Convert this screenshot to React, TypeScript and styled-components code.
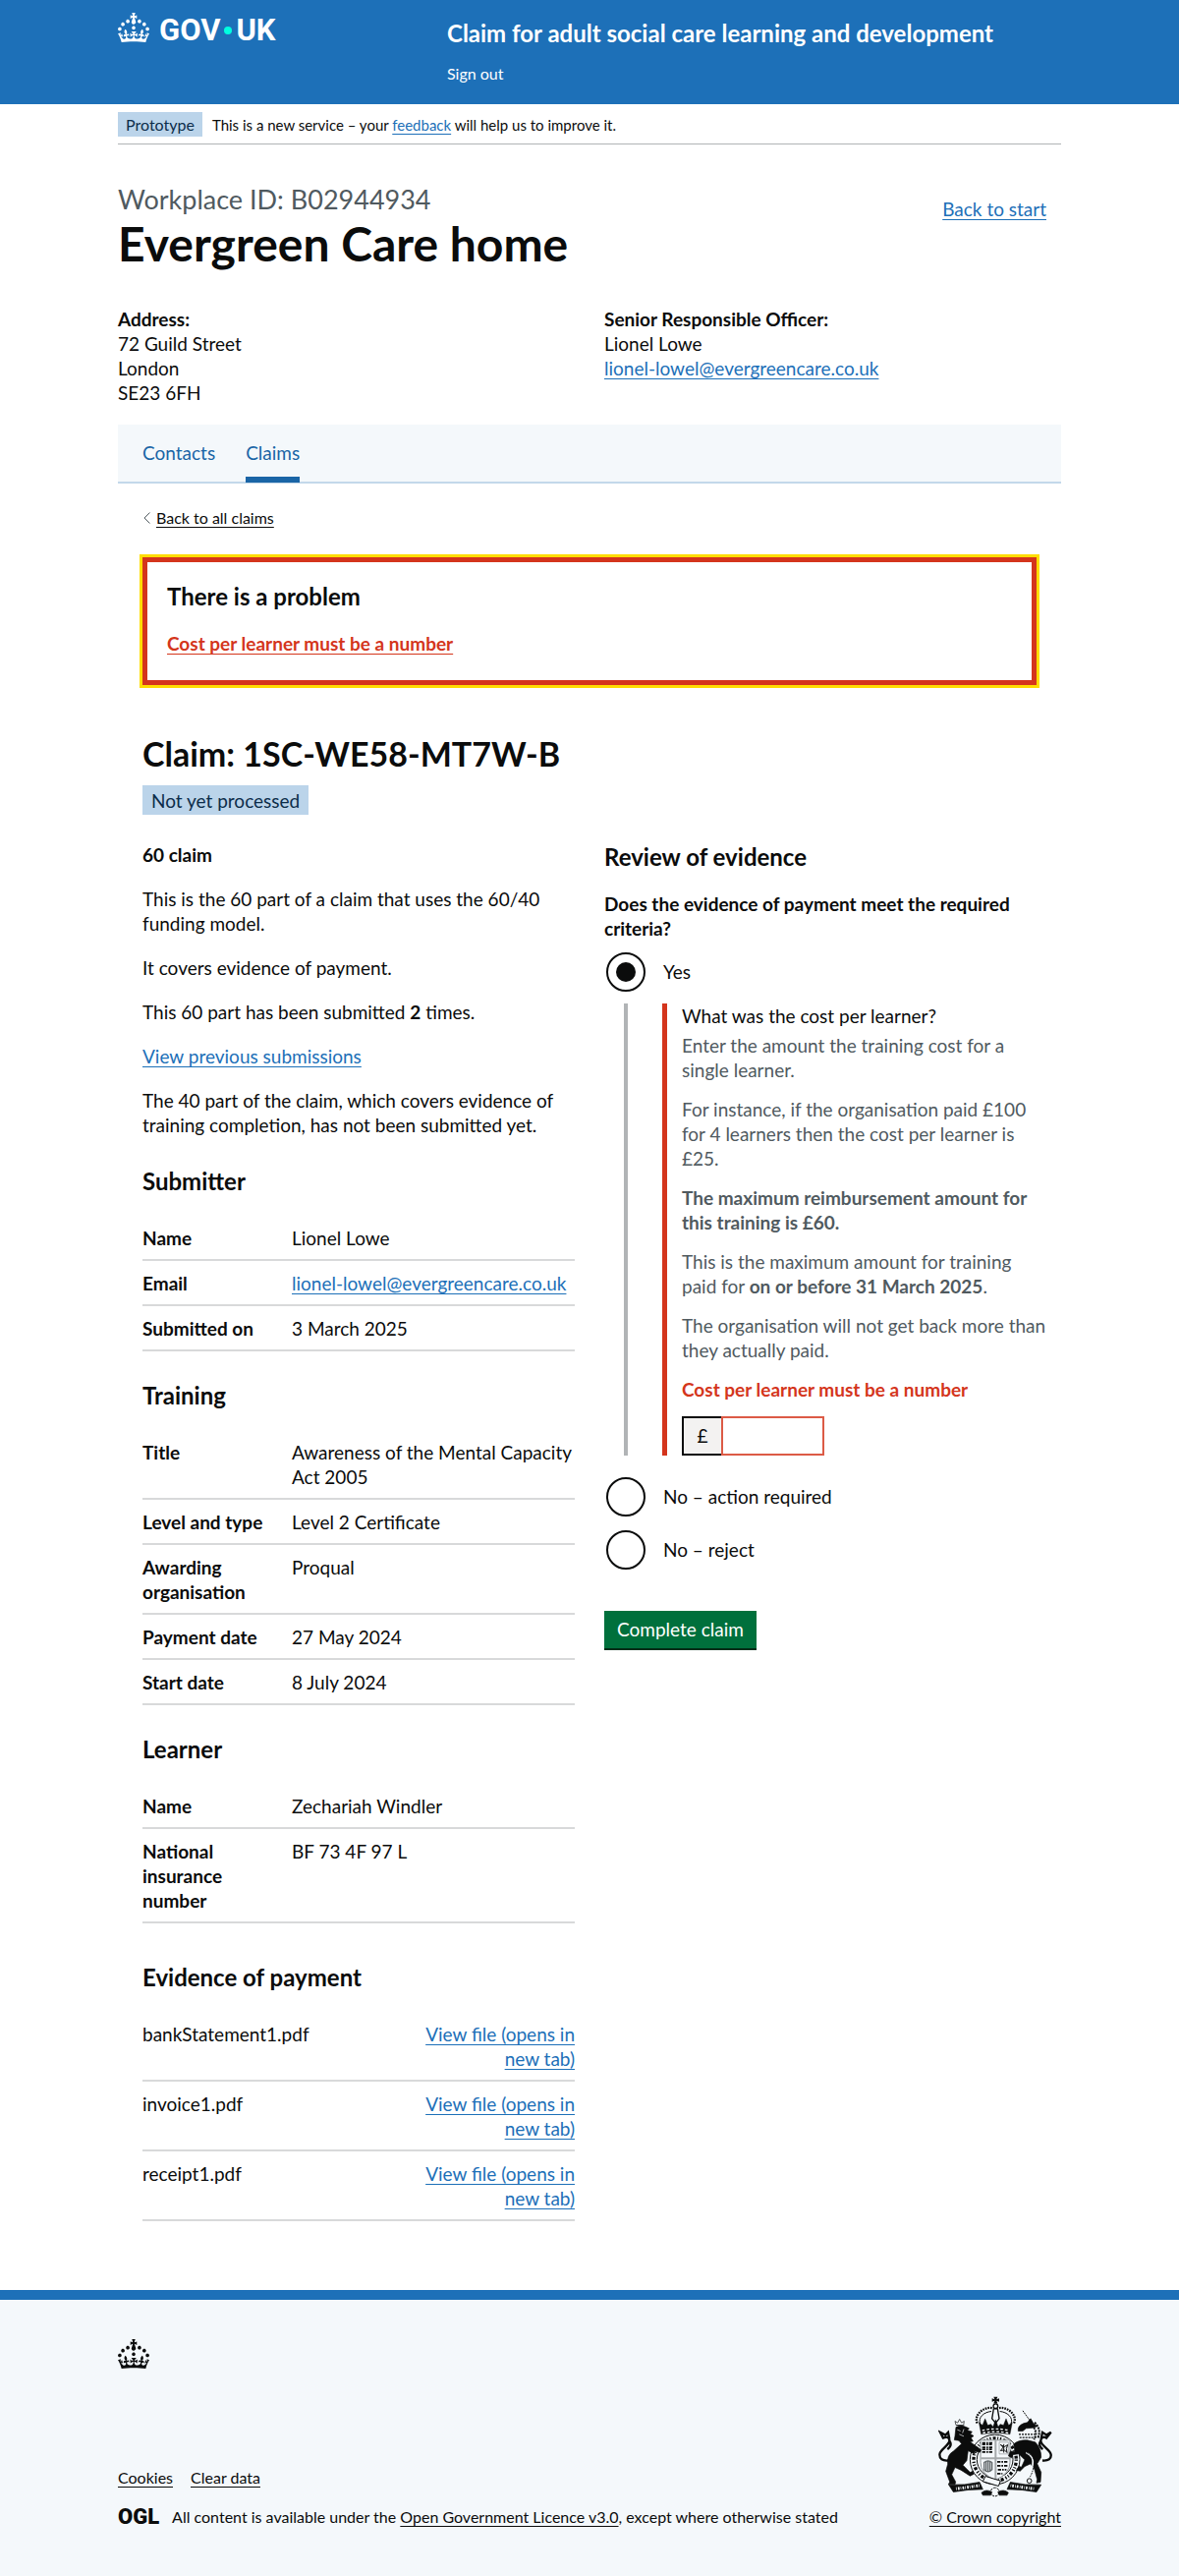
import React from "react";
import styled, { createGlobalStyle } from "styled-components";

const color = {
  text: "#0b0c0c",
  secondary: "#505a5f",
  blue: "#1d70b8",
  navBlue: "#1a65a6",
  pale: "#f4f8fb",
  rule: "#d8d9da",
  error: "#d4351c",
};

const GlobalStyle = createGlobalStyle`
  *, *::before, *::after { box-sizing: border-box; }
  body {
    margin: 0;
    background: #ffffff;
    color: ${color.text};
    font-family: Lato, Roboto, "Liberation Sans", sans-serif;
    font-size: 19px;
    line-height: 25px;
  }
  h1, h2, p, dl, dd, dt, ul, fieldset, legend { margin: 0; padding: 0; }
  ul { list-style: none; }
  svg { display: block; flex: none; }
  fieldset { border: 0; min-width: 0; }
`;

const Container = styled.div`
  max-width: 960px;
  margin: 0 auto;
`;

const Link = styled.a<{ $tone?: string }>`
  color: ${(p) => p.$tone ?? color.blue};
  text-decoration: underline;
  text-decoration-thickness: 1px;
  text-underline-offset: 3px;
`;

/* Header */

const HeaderBar = styled.header`
  background: ${color.blue};
  color: #ffffff;
`;

const HeaderGrid = styled(Container)`
  display: grid;
  grid-template-columns: 335px 1fr;
  padding-bottom: 21px;
`;

const LogoLink = styled.a`
  display: flex;
  align-items: flex-start;
  gap: 10px;
  padding-top: 13px;
  color: #ffffff;
  text-decoration: none;
`;

const Wordmark = styled.span`
  display: flex;
  align-items: center;
  gap: 4px;
  padding-top: 2px;
  font-family: Roboto, "Liberation Sans", sans-serif;
  font-size: 31px;
  line-height: 32px;
  font-weight: 700;
`;

const WordmarkDot = styled.span`
  width: 8px;
  height: 8px;
  border-radius: 50%;
  background: #00ffe0;
`;

const HeaderContent = styled.div`
  display: flex;
  flex-direction: column;
  align-items: flex-start;
  gap: 16px;
  padding-top: 19px;
`;

const ServiceName = styled.a`
  color: #ffffff;
  font-size: 24px;
  line-height: 30px;
  font-weight: 700;
  text-decoration: none;
`;

const SignOut = styled.a`
  color: #ffffff;
  font-size: 16px;
  line-height: 20px;
  text-decoration: none;
`;

const PhaseBanner = styled(Container)`
  display: flex;
  align-items: center;
  gap: 10px;
  padding: 8px 0 7px;
  border-bottom: 1px solid #b1b4b6;
  font-size: 15px;
  line-height: 20px;
`;

const Tag = styled.strong<{ $small?: boolean }>`
  display: inline-block;
  padding: ${(p) => (p.$small ? "3px 8px 2px" : "3px 9px 2px")};
  background: #bbd4ea;
  color: #0c2d4a;
  font-weight: 400;
  font-size: ${(p) => (p.$small ? "16px" : "19px")};
  line-height: ${(p) => (p.$small ? "20px" : "25px")};
`;

/* Workplace summary */

const WorkplaceHead = styled.div`
  display: flex;
  justify-content: space-between;
  align-items: flex-start;
  padding: 41px 15px 39px 0;
`;

const StartLink = styled(Link)`
  margin-top: 12px;
`;

const Caption = styled.span`
  display: block;
  margin-bottom: 5px;
  color: ${color.secondary};
  font-size: 27px;
  line-height: 30px;
  font-weight: 400;
`;

const PageTitle = styled.h1`
  font-size: 48px;
  line-height: 50px;
  font-weight: 700;
`;

const Halves = styled.div`
  display: grid;
  grid-template-columns: 1fr 1fr;
  column-gap: 30px;
`;

const Contact = styled.div`
  display: flex;
  flex-direction: column;
  align-items: flex-start;
`;

const SubNav = styled.nav`
  display: flex;
  gap: 31px;
  margin-top: 20px;
  padding: 0 25px;
  background: ${color.pale};
  border-bottom: 2px solid #c3d8ea;
`;

const SubNavLink = styled.a<{ $current?: boolean }>`
  margin-bottom: -1px;
  padding: 16px 0 12px;
  border-bottom: 6px solid ${(p) => (p.$current ? color.navBlue : "transparent")};
  color: ${color.navBlue};
  text-decoration: none;
`;

/* Claim */

const Inset = styled.main`
  padding: 25px 25px 70px;
`;

const BackRow = styled.div`
  display: flex;
  align-items: center;
  gap: 5px;
  font-size: 16px;
  line-height: 20px;
`;

const ErrorSummary = styled.div`
  margin: 30px 0 50px;
  padding: 20px 20px 25px;
  border: 5px solid ${color.error};
  outline: 3px solid #ffdd00;
`;

const Heading = styled.h2<{ $before?: number }>`
  margin: ${(p) => p.$before ?? 0}px 0 20px;
  font-size: 24px;
  line-height: 30px;
  font-weight: 700;
`;

const ClaimTitle = styled.h2`
  margin-bottom: 12px;
  font-size: 34px;
  line-height: 40px;
  font-weight: 700;
`;

const ClaimColumns = styled(Halves)`
  margin-top: 28px;
`;

const Prose = styled.div`
  display: flex;
  flex-direction: column;
  gap: 20px;
`;

const SummaryList = styled.dl``;

const SummaryRow = styled.div<{ $columns: string }>`
  display: grid;
  grid-template-columns: ${(p) => p.$columns};
  padding: 10px 0 9px;
  border-bottom: 2px solid ${color.rule};
`;

const Key = styled.dt<{ $plain?: boolean }>`
  padding-right: 20px;
  font-weight: ${(p) => (p.$plain ? 400 : 700)};
`;

const Value = styled.dd<{ $end?: boolean }>`
  text-align: ${(p) => (p.$end ? "right" : "left")};
`;

/* Review form */

const Legend = styled.legend`
  margin-bottom: 10px;
  font-weight: 700;
`;

const RadioItem = styled.div<{ $before?: number }>`
  display: flex;
  align-items: center;
  height: 44px;
  margin-top: ${(p) => p.$before ?? 0}px;
  padding-left: 2px;
`;

const Radio = styled.input`
  appearance: none;
  display: grid;
  place-items: center;
  flex: none;
  width: 40px;
  height: 40px;
  margin: 0;
  border: 2px solid ${color.text};
  border-radius: 50%;
  background: #ffffff;
  &:checked::before {
    content: "";
    width: 20px;
    height: 20px;
    border-radius: 50%;
    background: ${color.text};
  }
`;

const RadioLabel = styled.label`
  padding: 6px 15px 8px 18px;
`;

const Conditional = styled.div`
  margin: 10px 0 20px 20px;
  padding-left: 35px;
  border-left: 4px solid #b1b4b6;
`;

const ErrorGroup = styled.div`
  padding-left: 15px;
  border-left: 5px solid ${color.error};
`;

const CostLabel = styled.label`
  display: block;
  margin-bottom: 5px;
`;

const Hint = styled.div`
  display: flex;
  flex-direction: column;
  gap: 15px;
  margin-right: -12px;
  color: ${color.secondary};
`;

const ErrorMessage = styled.p`
  margin: 15px 0;
  color: ${color.error};
  font-weight: 700;
`;

const MoneyField = styled.div`
  display: flex;
  height: 40px;
`;

const Prefix = styled.span`
  width: 40px;
  padding: 5px 0;
  border: 2px solid ${color.text};
  border-right: 0;
  background: #f3f2f1;
  text-align: center;
`;

const MoneyInput = styled.input`
  width: 105px;
  padding: 5px;
  border: 2px solid #dc5b46;
  border-radius: 0;
  font: inherit;
`;

const SubmitButton = styled.button`
  margin-top: 40px;
  padding: 6px 13px 7px;
  border: 0;
  border-radius: 0;
  background: #00703c;
  box-shadow: 0 2px 0 #002d18;
  color: #ffffff;
  font: inherit;
`;

/* Footer */

const FooterBar = styled.footer`
  border-top: 10px solid ${color.blue};
  background: ${color.pale};
  font-size: 16px;
  line-height: 20px;
`;

const FooterInner = styled(Container)`
  padding: 40px 0 50px;
`;

const FooterMeta = styled.div`
  display: flex;
  justify-content: space-between;
  align-items: flex-end;
  margin-top: 28px;
`;

const FooterLinks = styled.ul`
  display: flex;
  gap: 18px;
  margin-bottom: 20px;
`;

const Licence = styled.div`
  display: flex;
  align-items: center;
  gap: 13px;
`;

const OglMark = styled.span`
  font-family: Roboto, sans-serif;
  font-size: 22px;
  line-height: 20px;
  font-weight: 900;
`;

const Copyright = styled.a`
  display: flex;
  flex-direction: column;
  align-items: center;
  gap: 10px;
  color: ${color.text};
  text-decoration: underline;
  text-decoration-thickness: 1px;
  text-underline-offset: 3px;
`;

const Crown = () => (
  <svg width="32" height="30" viewBox="0 0 32 30" fill="currentColor" fillRule="evenodd" aria-hidden="true">
    <path d="M22.6 10.4c-1 .4-2-.1-2.4-1-.4-.9.1-2 1-2.4.9-.4 2 .1 2.4 1s-.1 2-1 2.4m-5.9 6.7c-.9.4-2-.1-2.4-1-.4-.9.1-2 1-2.4.9-.4 2 .1 2.4 1s-.1 2-1 2.4m10.8-3.7c-1 .4-2-.1-2.4-1-.4-.9.1-2 1-2.4.9-.4 2 .1 2.4 1s0 2-1 2.4m3.3 4.8c-1 .4-2-.1-2.4-1-.4-.9.1-2 1-2.4.9-.4 2 .1 2.4 1s-.1 2-1 2.4M17 4.7l2.3 1.2V2.5l-2.3.7-.2-.2.9-3h-3.4l.9 3-.2.2c-.1.1-2.3-.7-2.3-.7v3.4L15 4.7c.1.1.1.2.2.2l-1.3 4c-.1.2-.1.4-.1.6 0 1.1.8 2 1.9 2.2h.7c1-.2 1.9-1.1 1.9-2.1 0-.2 0-.4-.1-.6l-1.3-4c-.1-.2 0-.2.1-.3m-7.6 5.7c.9.4 2-.1 2.4-1 .4-.9-.1-2-1-2.4-.9-.4-2 .1-2.4 1s0 2 1 2.4m-5 3c.9.4 2-.1 2.4-1 .4-.9-.1-2-1-2.4-.9-.4-2 .1-2.4 1s.1 2 1 2.4m-3.2 4.8c.9.4 2-.1 2.4-1 .4-.9-.1-2-1-2.4-.9-.4-2 .1-2.4 1s0 2 1 2.4m14.8 11c4.4 0 8.6.3 12.3.8 1.1-4.5 2.4-7 3.7-8.8l-2.5-.9c.2 1.3.3 1.9 0 2.7-.4-.4-.8-1.1-1.1-2.3l-1.2 4c.7-.5 1.3-.8 2-.9-1.1 2.5-2.6 3.1-3.5 3-1.1-.2-1.7-1.2-1.5-2.1.3-1.2 1.5-1.5 2.1-.1 1.1-2.3-.8-3-2-2.3 1.9-1.9 2.1-3.5.6-5.6-2.1 1.6-2.1 3.2-1.2 5.5-1.2-1.4-3.2-.6-2.5 1.6.9-1.4 2.1-.5 1.9.8-.2 1.1-1.7 2.1-3.5 1.9-2.7-.2-2.9-2.1-2.9-3.6.7-.1 1.9.5 2.9 1.9l.4-4.3c-1.1 1.1-2.1 1.4-3.2 1.4.4-1.2 2.1-3 2.1-3h-5.4s1.7 1.9 2.1 3c-1.1 0-2.1-.2-3.2-1.4l.4 4.3c1-1.4 2.2-2 2.9-1.9-.1 1.5-.2 3.4-2.9 3.6-1.9.2-3.4-.8-3.5-1.9-.2-1.3 1-2.2 1.9-.8.7-2.3-1.2-3-2.5-1.6.9-2.2.9-3.9-1.2-5.5-1.5 2-1.3 3.7.6 5.6-1.2-.7-3.1 0-2 2.3.6-1.4 1.8-1.1 2.1.1.2.9-.3 1.9-1.5 2.1-.9.2-2.4-.5-3.5-3 .6 0 1.2.3 2 .9l-1.2-4c-.3 1.1-.7 1.9-1.1 2.3-.3-.8-.2-1.4 0-2.7l-2.9.9C1.3 23 2.6 25.5 3.7 30c3.7-.5 7.9-.8 12.3-.8" />
  </svg>
);

const RoyalArms = () => (
  <svg width="116" height="103" viewBox="172 116 348 308" fill="none" stroke={color.text} aria-hidden="true">
    {/* crown */}
    <path d="M341 118h12l-3 7 8-3v11l-8-3 3 8h-12l3-8-8 3v-11l8 3z" fill={color.text} stroke="none" />
    <circle cx="347" cy="146" r="7" strokeWidth="4" />
    <path d="M291 198c-12-26 22-52 47-46M403 198c12-26-22-52-47-46" strokeWidth="7" strokeDasharray="5 3" />
    <path d="M300 200c-8-20 12-36 34-38M394 200c8-20-12-36-34-38" strokeWidth="3" />
    <path d="M341 154h12l5 30-11 14-11-14z" strokeWidth="4" />
    <path d="M296 196l11 8 8-20 8 20 10-3 6 8 8-22 8 22 6-8 10 3 8-20 8 20 11-8-7 36q-44-8-88 0z" fill={color.text} />
    <path d="M306 220q41-9 82 0M308 228q39-8 78 0" stroke={color.pale} strokeWidth="4" strokeDasharray="8 6" />
    {/* garter */}
    <circle cx="345" cy="309" r="76" fill={color.pale} strokeWidth="3" />
    <circle cx="345" cy="309" r="65" strokeWidth="10" strokeDasharray="4 6 9 5 3 5" />
    <circle cx="345" cy="309" r="55" strokeWidth="3" />
    {/* shield */}
    <path d="M301 250h90v68q0 34-45 54-45-20-45-54z" fill={color.pale} stroke="#8f9496" strokeWidth="3" />
    <path d="M306 258h34M306 272h34M306 286h34M306 263h30M306 278h30M352 316h34M352 328h34M354 340h26M352 352h16" strokeWidth="5" strokeDasharray="10 3 5 3" />
    <path d="M358 256h28v36h-28z" stroke="#8f9496" strokeWidth="2" />
    <path d="M362 264l8 8-8 10 12-2 8 8-2-12 4-12-10 6zM372 262v26" strokeWidth="3" />
    <path d="M312 318q12-10 24 0v22q-12 12-24 0zM318 316v30M324 314v32M330 316v30" stroke="#63696b" strokeWidth="4" />
    <path d="M347 250v120M302 305h90" stroke="#a5a9ab" strokeWidth="6" />
    {/* lion */}
    <path d="M226 204l-3-12 8 5 6-11 6 11 8-5-2 14zM228 204h20" strokeWidth="2" />
    <path d="M226 210q14-8 26-2l14 6-5 6 14 4-5 7 10 6-8 6 6 10-9 2 34 25-4 7-18-4 2 10-20-11-4 30-12 14 22 22 8-3 4 8-12 6-28-18-18-8-10 22 12 22-2 8h-20l4-8-12-32 6-22q-4-28 18-40l24-22-8-10-14-2 2-12z" fill={color.text} strokeWidth="2" />
    <path d="M230 218l10 4M236 232l14 6M250 216l-4 12" stroke={color.pale} strokeWidth="2" />
    <path d="M202 312q-26 2-26-18c0-16 28-26 30-42 1-12-12-14-20-8M206 252q10 14-6 26M188 246l-10-20 16 8 8-8 4 20" strokeWidth="7" />
    {/* unicorn */}
    <path d="M430 160l26 36" strokeWidth="3" strokeDasharray="5 2" />
    <path d="M416 214q4-14 28-18l10-12 8 14 12 10-14 4-20 2-10 8h-14z" fill={color.text} strokeWidth="2" />
    <path d="M466 196q22 20 10 48M458 204q20 22 6 44" strokeWidth="6" strokeDasharray="6 3" />
    <path d="M418 232h50M420 242h50" strokeWidth="4" strokeDasharray="6 3" />
    <path d="M402 262q16-14 42-12l24 6q18 18 18 46l-12 20 12 26-2 30-12 2 2-10-8-30-12-18-18 8-14 14-12-2 8-12 8 2 10-22-18-18-18 2-4 10-10-6 6-14h14z" fill={color.text} strokeWidth="2" />
    <path d="M440 288q26 10 20 40t-12 44" stroke={color.pale} strokeWidth="5" />
    <path d="M442 288q28 12 22 40t-14 36" strokeWidth="3" strokeDasharray="5 3" />
    <circle cx="450" cy="374" r="7" strokeWidth="3" />
    <path d="M490 312q28 2 26-18c-2-16-30-26-31-42 0-12 12-14 20-8M485 252q-10 14 6 26M500 246l16-20-14 8-12-8-4 20" strokeWidth="7" />
    {/* scroll and buckle */}
    <path d="M204 386q50 2 94-8l10 22q-46 0-90 8zM486 386q-50 2-94-8l-10 22q46 0 90 8z" fill={color.text} strokeWidth="2" />
    <path d="M226 398q36-4 72-10M464 398q-36-4-72-10" stroke={color.pale} strokeWidth="9" strokeDasharray="2 4 5 3" />
    <path d="M316 360l46 14-6 16-48-14z" fill={color.pale} strokeWidth="3" />
    <circle cx="345" cy="408" r="13" strokeWidth="3" strokeDasharray="8 3" />
    <path d="M304 410q14-12 32-2l-4 10h-24zM386 410q-14-12-32-2l4 10h24z" fill={color.text} strokeWidth="2" />
  </svg>
);

type Row = { label: string; value: React.ReactNode };

const Details = ({ rows }: { rows: Row[] }) => (
  <SummaryList>
    {rows.map((row) => (
      <SummaryRow key={row.label} $columns="152px 1fr">
        <Key>{row.label}</Key>
        <Value>{row.value}</Value>
      </SummaryRow>
    ))}
  </SummaryList>
);

const email = "lionel-lowel@evergreencare.co.uk";

const submitter: Row[] = [
  { label: "Name", value: "Lionel Lowe" },
  { label: "Email", value: <Link href={`mailto:${email}`}>{email}</Link> },
  { label: "Submitted on", value: "3 March 2025" },
];

const training: Row[] = [
  { label: "Title", value: "Awareness of the Mental Capacity Act 2005" },
  { label: "Level and type", value: "Level 2 Certificate" },
  { label: "Awarding organisation", value: "Proqual" },
  { label: "Payment date", value: "27 May 2024" },
  { label: "Start date", value: "8 July 2024" },
];

const learner: Row[] = [
  { label: "Name", value: "Zechariah Windler" },
  { label: "National insurance number", value: "BF 73 4F 97 L" },
];

const files = ["bankStatement1.pdf", "invoice1.pdf", "receipt1.pdf"];

export default function App() {
  return (
    <>
      <GlobalStyle />
      <HeaderBar>
        <HeaderGrid>
          <LogoLink href="#" aria-label="GOV.UK">
            <Crown />
            <Wordmark>
              GOV
              <WordmarkDot />
              UK
            </Wordmark>
          </LogoLink>
          <HeaderContent>
            <ServiceName href="#">Claim for adult social care learning and development</ServiceName>
            <SignOut href="#">Sign out</SignOut>
          </HeaderContent>
        </HeaderGrid>
      </HeaderBar>

      <PhaseBanner>
        <Tag $small>Prototype</Tag>
        <span>
          This is a new service – your <Link href="#">feedback</Link> will help us to improve it.
        </span>
      </PhaseBanner>

      <Container>
        <WorkplaceHead>
          <PageTitle>
            <Caption>Workplace ID: B02944934</Caption>
            Evergreen Care home
          </PageTitle>
          <StartLink href="#">Back to start</StartLink>
        </WorkplaceHead>
        <Halves>
          <Contact>
            <strong>Address:</strong>
            <span>72 Guild Street</span>
            <span>London</span>
            <span>SE23 6FH</span>
          </Contact>
          <Contact>
            <strong>Senior Responsible Officer:</strong>
            <span>Lionel Lowe</span>
            <Link href={`mailto:${email}`}>{email}</Link>
          </Contact>
        </Halves>
        <SubNav aria-label="Workplace">
          <SubNavLink href="#">Contacts</SubNavLink>
          <SubNavLink href="#" $current aria-current="page">
            Claims
          </SubNavLink>
        </SubNav>

        <Inset>
          <BackRow>
            <svg width="9" height="14" viewBox="0 0 9 14" fill="none" stroke={color.secondary} aria-hidden="true">
              <path d="M7.500 1.500L2 7l5.500 5.500" />
            </svg>
            <Link href="#" $tone={color.text}>
              Back to all claims
            </Link>
          </BackRow>

          <ErrorSummary role="alert">
            <Heading>There is a problem</Heading>
            <strong>
              <Link href="#cost" $tone={color.error}>
                Cost per learner must be a number
              </Link>
            </strong>
          </ErrorSummary>

          <ClaimTitle>Claim: 1SC-WE58-MT7W-B</ClaimTitle>
          <Tag>Not yet processed</Tag>

          <ClaimColumns>
            <div>
              <Prose>
                <strong>60 claim</strong>
                <p>This is the 60 part of a claim that uses the 60/40 funding model.</p>
                <p>It covers evidence of payment.</p>
                <p>
                  This 60 part has been submitted <strong>2</strong> times.
                </p>
                <p>
                  <Link href="#">View previous submissions</Link>
                </p>
                <p>The 40 part of the claim, which covers evidence of training completion, has not been submitted yet.</p>
              </Prose>

              <Heading $before={30}>Submitter</Heading>
              <Details rows={submitter} />
              <Heading $before={30}>Training</Heading>
              <Details rows={training} />
              <Heading $before={30}>Learner</Heading>
              <Details rows={learner} />
              <Heading $before={40}>Evidence of payment</Heading>
              <SummaryList>
                {files.map((file) => (
                  <SummaryRow key={file} $columns="3fr 2fr">
                    <Key $plain>{file}</Key>
                    <Value $end>
                      <Link href="#" target="_blank">
                        View file (opens in new tab)
                      </Link>
                    </Value>
                  </SummaryRow>
                ))}
              </SummaryList>
            </div>

            <form onSubmit={(e) => e.preventDefault()}>
              <Heading>Review of evidence</Heading>
              <fieldset>
                <Legend>Does the evidence of payment meet the required criteria?</Legend>
                <RadioItem>
                  <Radio type="radio" name="criteria" id="criteria-yes" defaultChecked />
                  <RadioLabel htmlFor="criteria-yes">Yes</RadioLabel>
                </RadioItem>
                <Conditional>
                  <ErrorGroup>
                    <CostLabel htmlFor="cost">What was the cost per learner?</CostLabel>
                    <Hint id="cost-hint">
                      <p>Enter the amount the training cost for a single learner.</p>
                      <p>For instance, if the organisation paid £100 for 4 learners then the cost per learner is £25.</p>
                      <p>
                        <strong>The maximum reimbursement amount for this training is £60.</strong>
                      </p>
                      <p>
                        This is the maximum amount for training paid for <strong>on or before 31 March 2025</strong>.
                      </p>
                      <p>The organisation will not get back more than they actually paid.</p>
                    </Hint>
                    <ErrorMessage id="cost-error">Cost per learner must be a number</ErrorMessage>
                    <MoneyField>
                      <Prefix aria-hidden="true">£</Prefix>
                      <MoneyInput id="cost" name="cost" type="text" aria-describedby="cost-hint cost-error" />
                    </MoneyField>
                  </ErrorGroup>
                </Conditional>
                <RadioItem>
                  <Radio type="radio" name="criteria" id="criteria-action" />
                  <RadioLabel htmlFor="criteria-action">No – action required</RadioLabel>
                </RadioItem>
                <RadioItem $before={10}>
                  <Radio type="radio" name="criteria" id="criteria-reject" />
                  <RadioLabel htmlFor="criteria-reject">No – reject</RadioLabel>
                </RadioItem>
              </fieldset>
              <SubmitButton type="submit">Complete claim</SubmitButton>
            </form>
          </ClaimColumns>
        </Inset>
      </Container>

      <FooterBar>
        <FooterInner>
          <Crown />
          <FooterMeta>
            <div>
              <FooterLinks>
                <li>
                  <Link href="#" $tone={color.text}>
                    Cookies
                  </Link>
                </li>
                <li>
                  <Link href="#" $tone={color.text}>
                    Clear data
                  </Link>
                </li>
              </FooterLinks>
              <Licence>
                <OglMark>OGL</OglMark>
                <span>
                  All content is available under the{" "}
                  <Link href="#" $tone={color.text}>
                    Open Government Licence v3.0
                  </Link>
                  , except where otherwise stated
                </span>
              </Licence>
            </div>
            <Copyright href="#">
              <RoyalArms />
              <span>© Crown copyright</span>
            </Copyright>
          </FooterMeta>
        </FooterInner>
      </FooterBar>
    </>
  );
}
